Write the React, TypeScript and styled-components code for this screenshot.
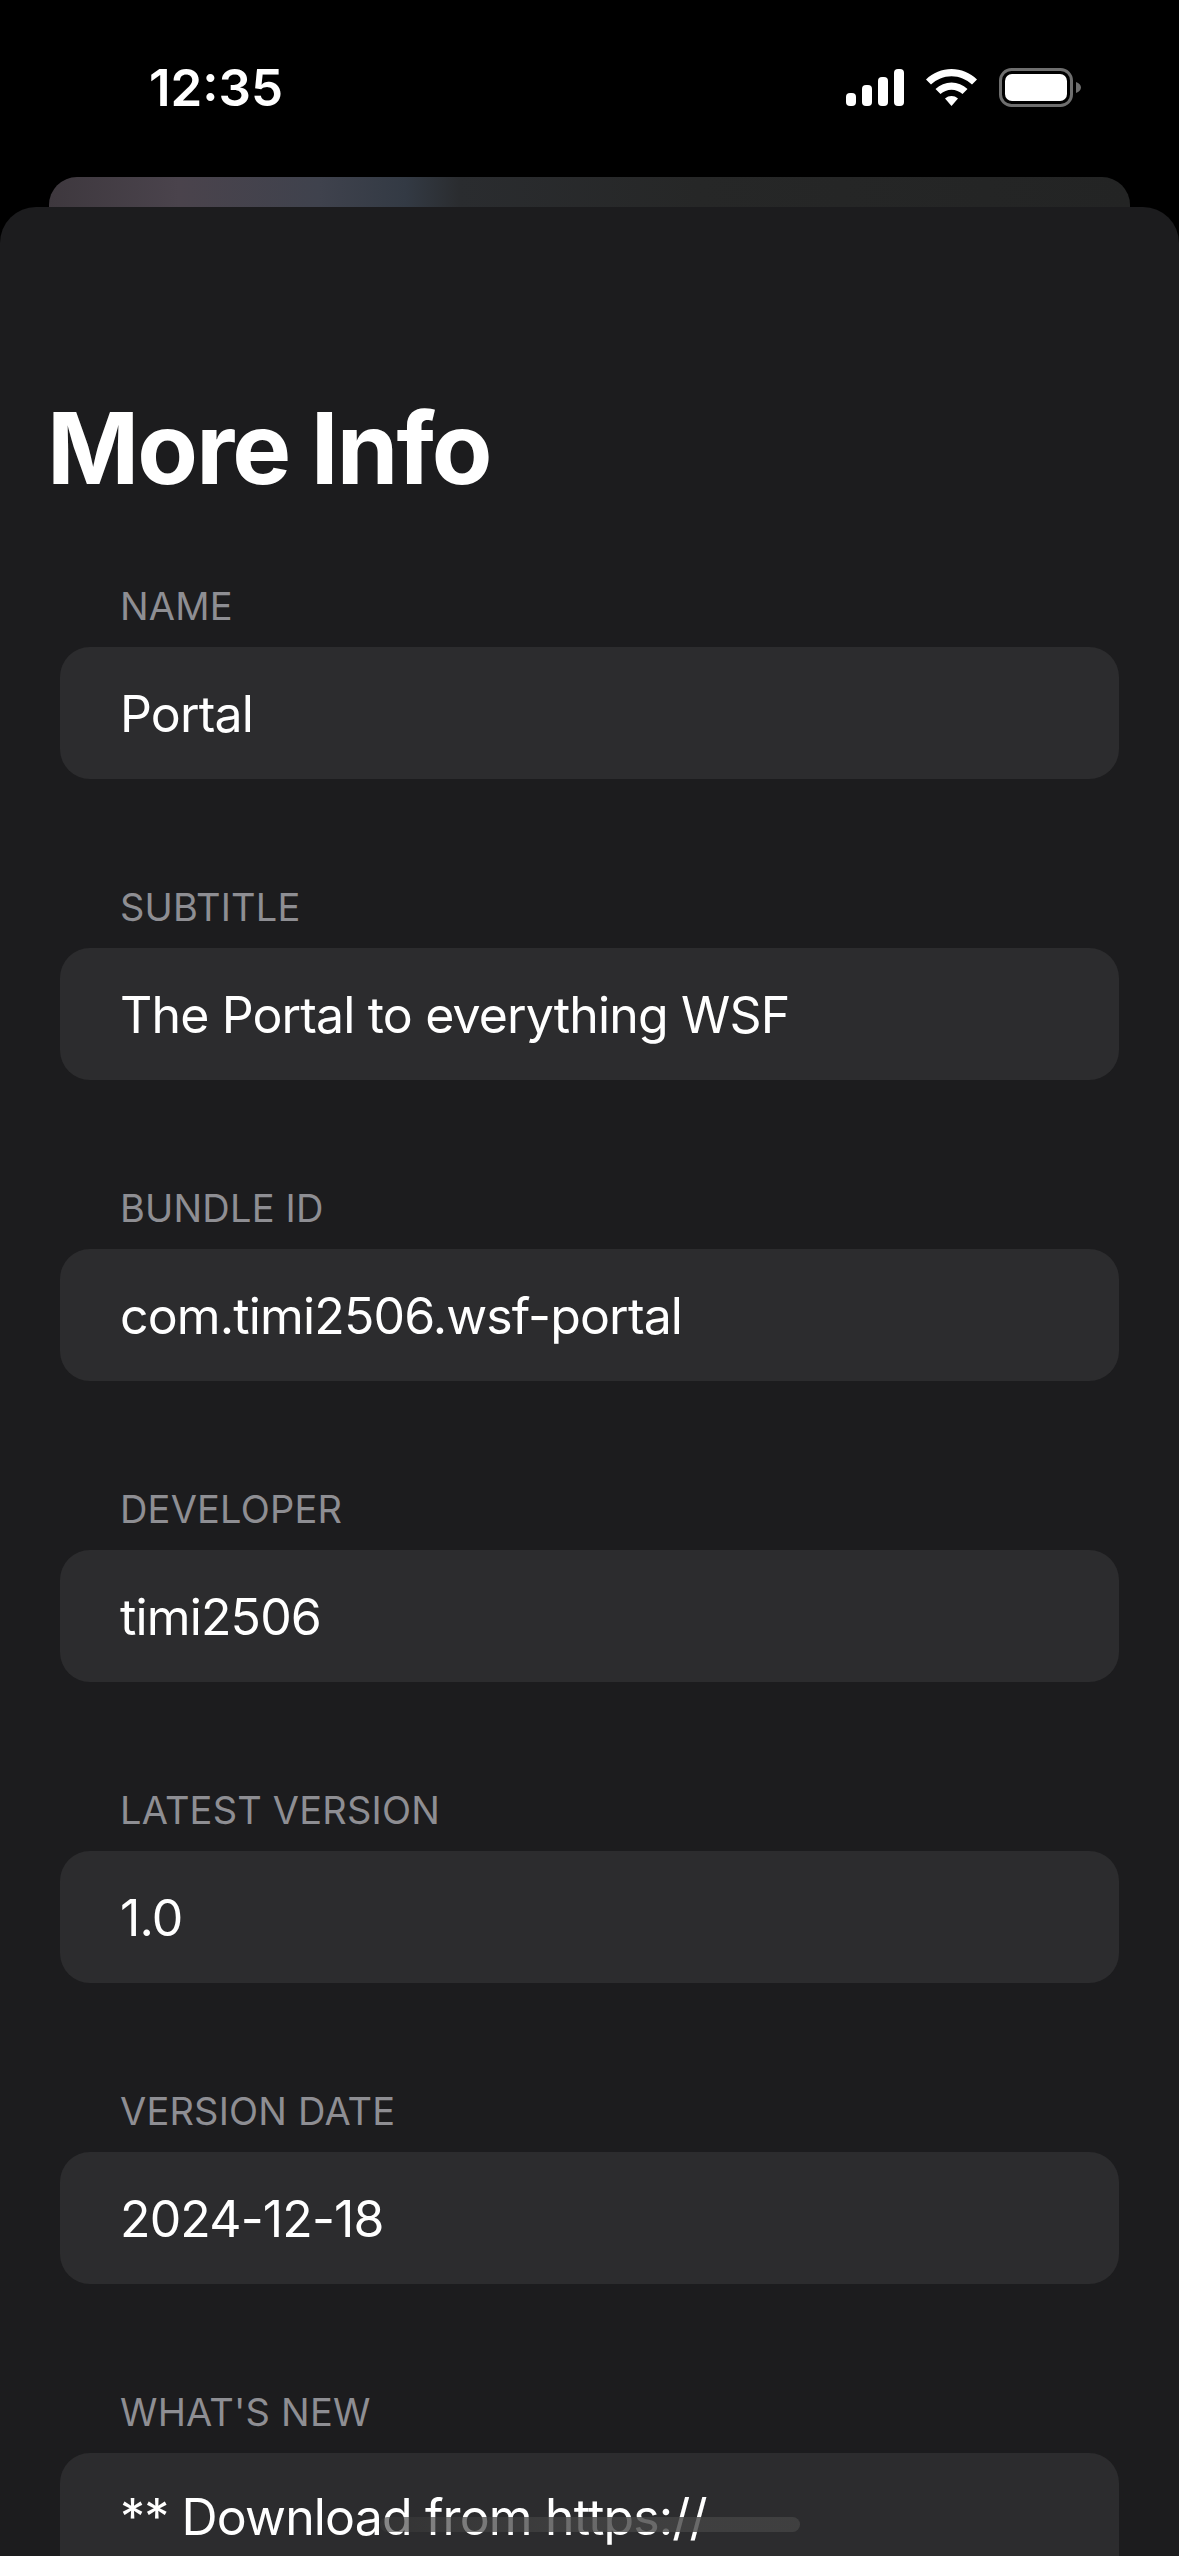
import React from "react";
import styled, { createGlobalStyle } from "styled-components";

const GlobalStyle = createGlobalStyle`
  html, body {
    margin: 0;
    padding: 0;
    background: #000;
  }
`;

const Screen = styled.div`
  width: 1179px;
  height: 2556px;
  overflow: hidden;
  background: #000;
  font-family: Inter, "Liberation Sans", sans-serif;
  display: flex;
  flex-direction: column;
  position: relative;
`;

const StatusBar = styled.div`
  height: 177px;
  flex: none;
  display: flex;
  justify-content: space-between;
  align-items: flex-start;
  padding: 60px 98px 0 149px;
  box-sizing: border-box;
`;

const Time = styled.div`
  color: #fff;
  font-size: 51px;
  font-weight: 600;
  line-height: 56px;
`;

const StatusIcons = styled.div`
  display: flex;
  align-items: center;
  gap: 22px;
  margin-top: 8px;
`;

const PeekCard = styled.div`
  height: 30px;
  flex: none;
  margin: 0 49px;
  border-radius: 28px 28px 0 0;
  background: linear-gradient(
    90deg,
    #3e383e 0%,
    #4a434c 12%,
    #3f424d 25%,
    #333a44 33%,
    #2a2c2f 38%,
    #262727 60%,
    #232424 100%
  );
`;

const Sheet = styled.div`
  flex: none;
  background: #1c1c1e;
  border-radius: 36px 36px 0 0;
  padding: 181px 60px 0;
`;

const Title = styled.h1`
  margin: 0 0 0 -13px;
  color: #fff;
  font-size: 99px;
  font-weight: 700;
  line-height: 120px;
  letter-spacing: -1.9px;
`;

const FieldList = styled.div`
  display: flex;
  flex-direction: column;
  gap: 106px;
  margin-top: 76px;
`;

const Field = styled.div`
  display: flex;
  flex-direction: column;
`;

const FieldLabel = styled.div`
  color: #8e8e93;
  font-size: 38px;
  font-weight: 400;
  line-height: 44px;
  letter-spacing: 0.2px;
  padding-left: 60px;
  margin-bottom: 19px;
`;

const FieldValue = styled.div<{ $multiline?: boolean }>`
  background: #2c2c2e;
  border-radius: 30px;
  min-height: ${(p) => (p.$multiline ? "200px" : "132px")};
  box-sizing: border-box;
  padding: ${(p) => (p.$multiline ? "34px 60px" : "2px 60px 0")};
  display: flex;
  align-items: ${(p) => (p.$multiline ? "flex-start" : "center")};
  color: #fff;
  font-size: 50px;
  font-weight: 400;
  line-height: 60px;
  letter-spacing: -0.85px;
`;

const HomeIndicator = styled.div`
  position: absolute;
  left: 380px;
  top: 2517px;
  width: 420px;
  height: 15px;
  border-radius: 8px;
  background: linear-gradient(90deg, rgba(56, 56, 56, 0.6), rgba(68, 68, 68, 0.8) 50%);
`;

const fields = [
  { label: "NAME", value: "Portal" },
  { label: "SUBTITLE", value: "The Portal to everything WSF" },
  { label: "BUNDLE ID", value: "com.timi2506.wsf-portal" },
  { label: "DEVELOPER", value: "timi2506" },
  { label: "LATEST VERSION", value: "1.0" },
  { label: "VERSION DATE", value: "2024-12-18" },
  { label: "WHAT'S NEW", value: "** Download from https://", multiline: true },
];

function SignalIcon() {
  return (
    <svg width="58" height="37" viewBox="0 0 58 37" fill="#fff">
      <rect x="0" y="24" width="10" height="13" rx="4" />
      <rect x="16" y="16" width="10" height="21" rx="4" />
      <rect x="32" y="8" width="10" height="29" rx="4" />
      <rect x="48" y="0" width="10" height="37" rx="4" />
    </svg>
  );
}

function WifiIcon() {
  return (
    <svg width="51" height="37" viewBox="0 0 51 37" fill="#fff">
      <path d="M25.5 0C35 0 44 3.8 51 10.5L46 15.5C40.5 10.3 33.2 7.2 25.5 7.2C17.8 7.2 10.5 10.3 5 15.5L0 10.5C7 3.8 16 0 25.5 0Z" />
      <path d="M25.5 13.5C31.5 13.5 37 15.8 41.5 20L36.5 25C33.5 22.3 29.6 20.7 25.5 20.7C21.4 20.7 17.5 22.3 14.5 25L9.5 20C14 15.8 19.5 13.5 25.5 13.5Z" />
      <path d="M25.5 27C28 27 30 27.8 32 29.5L25.5 37L19 29.5C21 27.8 23 27 25.5 27Z" />
    </svg>
  );
}

function BatteryIcon() {
  return (
    <svg width="82" height="39" viewBox="0 0 82 39">
      <rect x="1.5" y="1.5" width="71" height="36" rx="11" fill="none" stroke="#6e6e6e" strokeWidth="3" />
      <rect x="6" y="6" width="62" height="27" rx="7" fill="#fff" />
      <path d="M77 14C80 15 82 17 82 19.5C82 22 80 24 77 25Z" fill="#6e6e6e" />
    </svg>
  );
}

export default function App() {
  return (
    <Screen>
      <GlobalStyle />
      <StatusBar>
        <Time>12:35</Time>
        <StatusIcons>
          <SignalIcon />
          <WifiIcon />
          <BatteryIcon />
        </StatusIcons>
      </StatusBar>
      <PeekCard />
      <Sheet>
        <Title>More Info</Title>
        <FieldList>
          {fields.map((field) => (
            <Field key={field.label}>
              <FieldLabel>{field.label}</FieldLabel>
              <FieldValue $multiline={field.multiline}>{field.value}</FieldValue>
            </Field>
          ))}
        </FieldList>
      </Sheet>
      <HomeIndicator />
    </Screen>
  );
}
